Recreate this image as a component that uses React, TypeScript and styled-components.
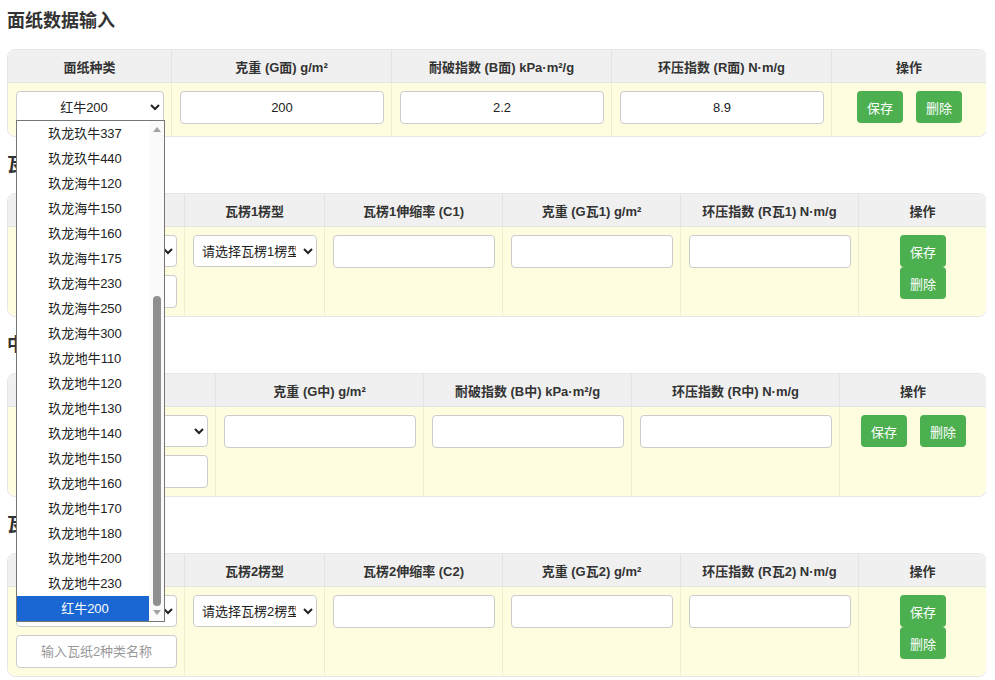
import React from "react";
import styled, { createGlobalStyle } from "styled-components";

const GlobalStyle = createGlobalStyle`
  body {
    margin: 8px 9px 8px 7px;
    background: #fff;
    font-family: "Liberation Sans", "Noto Sans CJK SC", sans-serif;
    color: #333;
  }
`;

const Section = styled.section`
  margin-bottom: 16px;
`;

const Title = styled.h2`
  margin: 1px 0 16px;
  font-size: 18px;
  line-height: 24px;
  font-weight: bold;
  color: #333;
`;

const Table = styled.table`
  width: 100%;
  table-layout: fixed;
  border-collapse: separate;
  border-spacing: 0;
  border: 1px solid #e6e6e6;
  border-radius: 8px;
  font-size: 13px;
`;

const Th = styled.th<{ $first?: boolean; $last?: boolean }>`
  background: #f0f0f0;
  font-weight: bold;
  color: #333;
  height: 32px;
  padding: 0 8px;
  text-align: center;
  border-left: ${(p) => (p.$first ? "none" : "1px solid #e3e3e3")};
  border-bottom: 1px solid #e3e3e3;
  border-top-left-radius: ${(p) => (p.$first ? "8px" : "0")};
  border-top-right-radius: ${(p) => (p.$last ? "8px" : "0")};
`;

const Td = styled.td<{ $first?: boolean; $last?: boolean }>`
  background: #fffde0;
  padding: 8px 7px 8px 8px;
  vertical-align: top;
  text-align: center;
  border-left: ${(p) => (p.$first ? "none" : "1px solid #f0eed2")};
  border-bottom-left-radius: ${(p) => (p.$first ? "8px" : "0")};
  border-bottom-right-radius: ${(p) => (p.$last ? "8px" : "0")};
`;

const Field = styled.input`
  display: block;
  width: 100%;
  box-sizing: border-box;
  height: 33px;
  border: 1px solid #ccc;
  border-radius: 4px;
  background: #fff;
  font-family: inherit;
  font-size: 13px;
  color: #222;
  text-align: center;
  &::placeholder {
    color: #999;
  }
`;

const SelectBox = styled.div<{ $gap: number }>`
  position: relative;
  margin-bottom: ${(p) => p.$gap}px;
`;

const Select = styled.select<{ $align?: string }>`
  display: block;
  width: 100%;
  box-sizing: border-box;
  height: 32px;
  border: 1px solid #ccc;
  border-radius: 4px;
  background: #fff;
  font-family: inherit;
  font-size: 13px;
  color: #222;
  text-align: ${(p) => p.$align || "center"};
  padding: 0 4px;
`;

const Actions = styled.div`
  display: flex;
  flex-wrap: wrap;
  justify-content: center;
  column-gap: 3px;
`;

const Button = styled.button`
  margin: 0 5px;
  padding: 0 10px;
  height: 32px;
  border: none;
  border-radius: 4px;
  background: #4caf50;
  color: #fff;
  font-family: inherit;
  font-size: 13px;
  cursor: pointer;
`;

const List = styled.div`
  position: absolute;
  top: calc(100% - 3px);
  left: 0;
  width: 149px;
  box-sizing: border-box;
  border: 1px solid #767676;
  background: #fff;
  display: flex;
  z-index: 10;
`;

const Options = styled.div`
  flex: 1;
`;

const Option = styled.div<{ $selected?: boolean }>`
  height: 25px;
  line-height: 25px;
  font-size: 13px;
  text-align: center;
  padding-left: 4px;
  color: ${(p) => (p.$selected ? "#fff" : "#222")};
  background: ${(p) => (p.$selected ? "#1a66d2" : "transparent")};
`;

const Scroll = styled.div`
  width: 15px;
  background: #fafafa;
  display: flex;
  flex-direction: column;
  align-items: center;
`;

const Arrow = styled.div<{ $down?: boolean }>`
  width: 0;
  height: 0;
  margin: ${(p) => (p.$down ? "4px 0 6px" : "6px 0 0")};
  border-left: 4px solid transparent;
  border-right: 4px solid transparent;
  border-bottom: ${(p) => (p.$down ? "none" : "5px solid #a3a3a3")};
  border-top: ${(p) => (p.$down ? "5px solid #a3a3a3" : "none")};
`;

const Track = styled.div`
  flex: 1;
  width: 8px;
  display: flex;
  flex-direction: column;
  justify-content: flex-end;
`;

const Thumb = styled.div`
  height: 310px;
  border-radius: 4px;
  background: #8f8f8f;
`;

const options = [
  "玖龙玖牛337",
  "玖龙玖牛440",
  "玖龙海牛120",
  "玖龙海牛150",
  "玖龙海牛160",
  "玖龙海牛175",
  "玖龙海牛230",
  "玖龙海牛250",
  "玖龙海牛300",
  "玖龙地牛110",
  "玖龙地牛120",
  "玖龙地牛130",
  "玖龙地牛140",
  "玖龙地牛150",
  "玖龙地牛160",
  "玖龙地牛170",
  "玖龙地牛180",
  "玖龙地牛200",
  "玖龙地牛230",
  "红牛200",
];

function Dropdown() {
  return (
    <List>
      <Options>
        {options.map((o) => (
          <Option key={o} $selected={o === "红牛200"}>
            {o}
          </Option>
        ))}
      </Options>
      <Scroll>
        <Arrow />
        <Track>
          <Thumb />
        </Track>
        <Arrow $down />
      </Scroll>
    </List>
  );
}

function ActionCell() {
  return (
    <Td $last>
      <Actions>
        <Button>保存</Button>
        <Button>删除</Button>
      </Actions>
    </Td>
  );
}

function Head({ cols }: { cols: string[] }) {
  return (
    <thead>
      <tr>
        {cols.map((c, i) => (
          <Th key={c} $first={i === 0} $last={i === cols.length - 1}>
            {c}
          </Th>
        ))}
      </tr>
    </thead>
  );
}

function Cols({ widths }: { widths: number[] }) {
  return (
    <colgroup>
      {widths.map((w, i) => (
        <col key={i} style={{ width: w }} />
      ))}
    </colgroup>
  );
}

function LinerSection() {
  return (
    <Section>
      <Title>面纸数据输入</Title>
      <Table>
        <Cols widths={[163, 220, 220, 220, 155]} />
        <Head cols={["面纸种类", "克重 (G面) g/m²", "耐破指数 (B面) kPa·m²/g", "环压指数 (R面) N·m/g", "操作"]} />
        <tbody>
          <tr>
            <Td $first>
              <SelectBox $gap={5}>
                <Select defaultValue="红牛200">
                  {options.map((o) => (
                    <option key={o}>{o}</option>
                  ))}
                </Select>
                <Dropdown />
              </SelectBox>
            </Td>
            <Td>
              <Field defaultValue="200" />
            </Td>
            <Td>
              <Field defaultValue="2.2" />
            </Td>
            <Td>
              <Field defaultValue="8.9" />
            </Td>
            <ActionCell />
          </tr>
        </tbody>
      </Table>
    </Section>
  );
}

function FluteSection({ n }: { n: number }) {
  return (
    <Section>
      <Title>瓦纸{n}数据输入</Title>
      <Table>
        <Cols widths={[176, 140, 178, 178, 178, 128]} />
        <Head
          cols={[
            `瓦纸${n}种类`,
            `瓦楞${n}楞型`,
            `瓦楞${n}伸缩率 (C${n})`,
            `克重 (G瓦${n}) g/m²`,
            `环压指数 (R瓦${n}) N·m/g`,
            "操作",
          ]}
        />
        <tbody>
          <tr>
            <Td $first>
              <SelectBox $gap={8}>
                <Select defaultValue="">
                  <option value="">请选择瓦纸{n}种类</option>
                </Select>
              </SelectBox>
              <Field placeholder={`输入瓦纸${n}种类名称`} />
            </Td>
            <Td>
              <Select defaultValue="" $align="left">
                <option value="">请选择瓦楞{n}楞型</option>
              </Select>
            </Td>
            <Td>
              <Field />
            </Td>
            <Td>
              <Field />
            </Td>
            <Td>
              <Field />
            </Td>
            <ActionCell />
          </tr>
        </tbody>
      </Table>
    </Section>
  );
}

function MediumSection() {
  return (
    <Section>
      <Title>中纸数据输入</Title>
      <Table>
        <Cols widths={[207, 208, 208, 208, 147]} />
        <Head cols={["中纸种类", "克重 (G中) g/m²", "耐破指数 (B中) kPa·m²/g", "环压指数 (R中) N·m/g", "操作"]} />
        <tbody>
          <tr>
            <Td $first>
              <SelectBox $gap={8}>
                <Select defaultValue="">
                  <option value="">请选择中纸种类</option>
                </Select>
              </SelectBox>
              <Field placeholder="输入中纸种类名称" />
            </Td>
            <Td>
              <Field />
            </Td>
            <Td>
              <Field />
            </Td>
            <Td>
              <Field />
            </Td>
            <ActionCell />
          </tr>
        </tbody>
      </Table>
    </Section>
  );
}

export default function App() {
  return (
    <>
      <GlobalStyle />
      <LinerSection />
      <FluteSection n={1} />
      <MediumSection />
      <FluteSection n={2} />
    </>
  );
}
